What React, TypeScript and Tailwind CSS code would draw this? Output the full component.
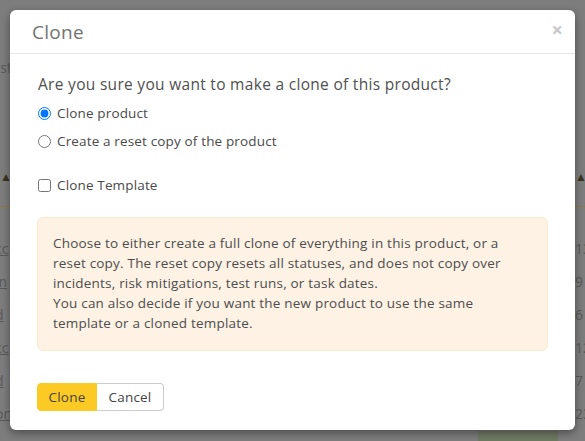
import React from "react";

export default function App() {
  const font = { fontFamily: '"Open Sans", "Noto Sans", sans-serif' };
  return (
    <div className="relative w-[585px] h-[441px] overflow-hidden bg-[#7d7d7d]" style={font}>
      {/* dimmed page behind the dialog */}
      <div className="flex justify-between h-full text-[#5a5a5a] text-[14px]">
        <div className="w-[12px] flex flex-col items-end overflow-hidden pt-[58px]">
          <div className="whitespace-nowrap leading-[20px]">st</div>
          <div className="mt-[90px] text-[12px] text-[#3a3320] self-start">▲</div>
          <div className="mt-[20px] w-full h-[1px] bg-[#8a7a45]" />
          <div className="mt-[32px] flex flex-col gap-[13px] leading-[20px] underline whitespace-nowrap">
            <div>cc</div>
            <div>in</div>
            <div>d</div>
            <div>cc</div>
            <div>d</div>
            <div className="no-underline">on</div>
          </div>
        </div>
        <div className="flex-1 flex flex-col justify-end">
          <div className="ml-[466px] w-[80px] h-[10px] bg-[#6f7a63]" />
        </div>
        <div className="w-[10px] flex flex-col overflow-hidden pt-[168px]">
          <div className="text-[12px] text-[#3a3320]">▲</div>
          <div className="mt-[20px] w-full h-[1px] bg-[#8a7a45]" />
          <div className="mt-[32px] flex flex-col gap-[13px] leading-[20px] whitespace-nowrap">
            <div>13</div>
            <div>9</div>
            <div>6</div>
            <div>12</div>
            <div>7</div>
            <div>23</div>
          </div>
        </div>
      </div>

      {/* modal dialog overlay */}
      <div className="absolute inset-0 p-[10px] pb-[11px] flex flex-col">
        <div className="flex-1 bg-white rounded-[6px] shadow-[0_3px_9px_rgba(0,0,0,0.4)] flex flex-col">
          <div className="h-[44px] border-b border-[#e5e5e5] flex items-center justify-between pl-[22px] pr-[12px] pt-[1px]">
            <div className="text-[19px] text-[#727272] tracking-[0.3px]">Clone</div>
            <div className="text-[20px] leading-none text-[#c8c8c8] font-bold -mt-[4px]">×</div>
          </div>
          <div className="flex flex-col pl-[28px] pr-[27px]">
            <div className="mt-[18px] text-[15.5px] text-[#505050] tracking-[0.3px] leading-[24px]">
              Are you sure you want to make a clone of this product?
            </div>
            <label className="mt-[7px] flex items-center gap-[6px] text-[13.5px] text-[#4a4a4a] tracking-[0.15px] h-[20px]">
              <input type="radio" name="c" defaultChecked className="m-0 w-[13px] h-[13px]" />
              Clone product
            </label>
            <label className="mt-[8px] flex items-center gap-[6px] text-[13.5px] text-[#4a4a4a] tracking-[0.15px] h-[20px]">
              <input type="radio" name="c" className="m-0 w-[13px] h-[13px]" />
              Create a reset copy of the product
            </label>
            <label className="mt-[24px] flex items-center gap-[6px] text-[13.5px] text-[#4a4a4a] tracking-[0.15px] h-[20px]">
              <input type="checkbox" className="m-0 w-[13px] h-[13px]" />
              Clone Template
            </label>
            <div className="mt-[22px] ml-[-1px] w-[511px] h-[134px] bg-[#fdf2e4] border border-[#faebcc] rounded-[6px] px-[15px] pt-[15px] text-[13.5px] leading-[20px] text-[#4d4d4d] tracking-[0.2px]">
              Choose to either create a full clone of everything in this product, or a reset copy. The reset copy resets all statuses, and does not copy over incidents, risk mitigations, test runs, or task dates.
              <br />
              You can also decide if you want the new product to use the same template or a cloned template.
            </div>
            <div className="mt-[32px] ml-[-1px] flex">
              <button className="h-[28px] w-[60px] bg-[#fcca24] border border-[#fcca24] rounded-l-[4px] text-[13.5px] text-[#444] tracking-[0.2px]">
                Clone
              </button>
              <button className="h-[28px] w-[67px] bg-white border border-[#cccccc] border-l-0 rounded-r-[4px] text-[13.5px] text-[#444] tracking-[0.2px]">
                Cancel
              </button>
            </div>
          </div>
        </div>
      </div>
    </div>
  );
}
